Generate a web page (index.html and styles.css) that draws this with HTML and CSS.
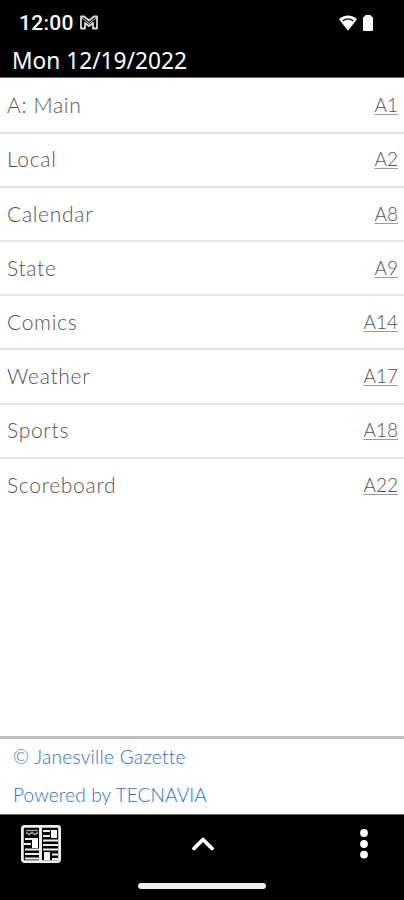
FILE: index.html
```
<!DOCTYPE html>
<html lang="en">
<head>
  <meta charset="UTF-8" />
  <meta name="viewport" content="width=device-width, initial-scale=1.0"/>
  <title>Janesville Gazette</title>
  <link rel="stylesheet" href="styles.css">
</head>
<body>
  <header class="header">
    <div class="status-bar">
      <span class="time">12:00</span>
      <svg class="mail-icon" width="18" height="15" viewBox="0 0 18 15" fill="none" stroke="#ddd">
        <path d="M1 1.5h3l5 4 5-4h3v12h-4V8L9 11 5 8v5.5H1z" stroke-width="1.8" stroke-linejoin="round"/>
        <path d="M2 3l7 5.5L16 3" stroke-width="1"/>
      </svg>
      <svg class="wifi-icon" width="18" height="16" viewBox="0 0 18 16">
        <path d="M0 4.3C5 -.6 13 -.6 18 4.3L9 15.8z" fill="#fff"/>
        <path d="M3.2 5.2C6.5 2.5 11.5 2.5 14.8 5.2L13.5 6.3C10.8 4.3 7.2 4.3 4.5 6.3z" fill="#222"/>
      </svg>
      <svg class="battery-icon" width="10" height="16" viewBox="0 0 10 16">
        <path d="M2.5 0h5l1 1.5Q10 1.8 10 3v12Q10 16 9 16H1Q0 16 0 15V3Q0 1.8 1.5 1.5z" fill="#fff"/>
      </svg>
    </div>
    <h1 class="date">Mon 12/19/2022</h1>
  </header>

  <ul class="sections">
    <li><span>A: Main</span><a class="page">A1</a></li>
    <li><span>Local</span><a class="page">A2</a></li>
    <li><span>Calendar</span><a class="page">A8</a></li>
    <li><span>State</span><a class="page">A9</a></li>
    <li><span>Comics</span><a class="page">A14</a></li>
    <li><span>Weather</span><a class="page">A17</a></li>
    <li><span>Sports</span><a class="page">A18</a></li>
    <li><span>Scoreboard</span><a class="page">A22</a></li>
  </ul>

  <footer class="credits">
    <a class="gazette">© Janesville Gazette</a>
    <a class="powered">Powered by TECNAVIA</a>
  </footer>

  <nav class="toolbar">
    <div class="buttons">
      <svg class="pages-icon" width="40" height="38" viewBox="0 0 40 38">
        <rect x="1.4" y="1.4" width="37.2" height="35.2" rx="2" fill="#000" stroke="#eee" stroke-width="2.8"/>
        <path d="M19.5 1v36" stroke="#eee" stroke-width="3"/>
        <path d="M4 14h13M3 19h7M4 24.5h14M4 29h14M4 33.5h14M22 6h7M22 11h7M22 15.5h15M22 20h15M22 24.5h15M31 29.5h6M31 34h6" stroke="#eee" stroke-width="2"/>
        <path d="M5 5.5h12M5 7.5l3 2 3-2 3 2 3-2" stroke="#999" stroke-width="1.6" fill="none"/>
        <path d="M11 15h6v8h-6zM30 5h6v8h-6zM23 27h6v8h-6z" fill="#fff"/>
      </svg>
      <svg class="up-icon" width="24" height="16" viewBox="0 0 24 16">
        <path d="M3 12.5L12 3.5l9 9" fill="none" stroke="#fff" stroke-width="3.8" stroke-linecap="round" stroke-linejoin="round"/>
      </svg>
      <svg class="more-icon" width="8" height="30" viewBox="0 0 8 30" fill="#fff">
        <circle cx="4" cy="4" r="3.9"/>
        <circle cx="4" cy="15" r="3.9"/>
        <circle cx="4" cy="25.6" r="3.9"/>
      </svg>
    </div>
    <div class="home-bar"></div>
  </nav>
</body>
</html>
```
FILE: styles.css
```
* {
  box-sizing: border-box;
  margin: 0;
  padding: 0;
}
body {
  display: flex;
  flex-direction: column;
  height: 900px;
  overflow: hidden;
  background-color: #fff;
  color: #555;
  font-family: Lato, sans-serif;
}
.header {
  height: 78px;
  background-color: #000;
  color: #fff;
  border-bottom: 1px solid #666;
}
.status-bar {
  display: flex;
  align-items: center;
  height: 45px;
  padding: 0 31px 0 19px;
}
.time {
  width: 61px;
  font-family: Roboto, sans-serif;
  font-size: 21px;
  font-weight: 500;
  letter-spacing: 0.3px;
}
.wifi-icon {
  margin-left: auto;
  margin-right: 6px;
}
.date {
  padding-left: 12px;
  font-family: "Noto Sans", sans-serif;
  font-size: 22.7px;
  font-weight: 400;
  line-height: 32px;
}
.sections {
  flex: 1;
  padding-top: 1.4px;
  list-style: none;
}
.sections li {
  display: flex;
  align-items: center;
  justify-content: space-between;
  height: 54.2px;
  padding: 0 6px 1.6px 7px;
  border-bottom: 2px solid #e6e6e6;
  font-size: 21px;
  font-weight: 300;
  letter-spacing: 0.7px;
}
.sections li:last-child {
  border-bottom-color: transparent;
}
.page {
  font-size: 19px;
  letter-spacing: 0;
  text-decoration: underline;
  text-decoration-color: #999;
  text-decoration-thickness: 1px;
  text-underline-offset: 2px;
}
.credits {
  height: 78px;
  padding-left: 13px;
  border-top: 3px solid #bdbdbd;
  color: #2a70d2;
  font-size: 19px;
  font-weight: 300;
}
.credits a {
  display: block;
  line-height: 38px;
  margin-top: -1px;
  margin-bottom: 1px;
}
.gazette {
  letter-spacing: 0.3px;
}
.powered {
  letter-spacing: 0.15px;
}
.toolbar {
  height: 86px;
  background-color: #000;
  border-top: 1px solid #666;
}
.buttons {
  display: grid;
  grid-template-columns: 1fr 24px 1fr;
  align-items: center;
  height: 58px;
  padding: 0 36px 0 37px;
}
.pages-icon {
  margin-left: -16px;
}
.more-icon {
  justify-self: end;
}
.home-bar {
  width: 128px;
  height: 6px;
  margin: 10px auto 0;
  border-radius: 3px;
  background-color: #eee;
}
```
